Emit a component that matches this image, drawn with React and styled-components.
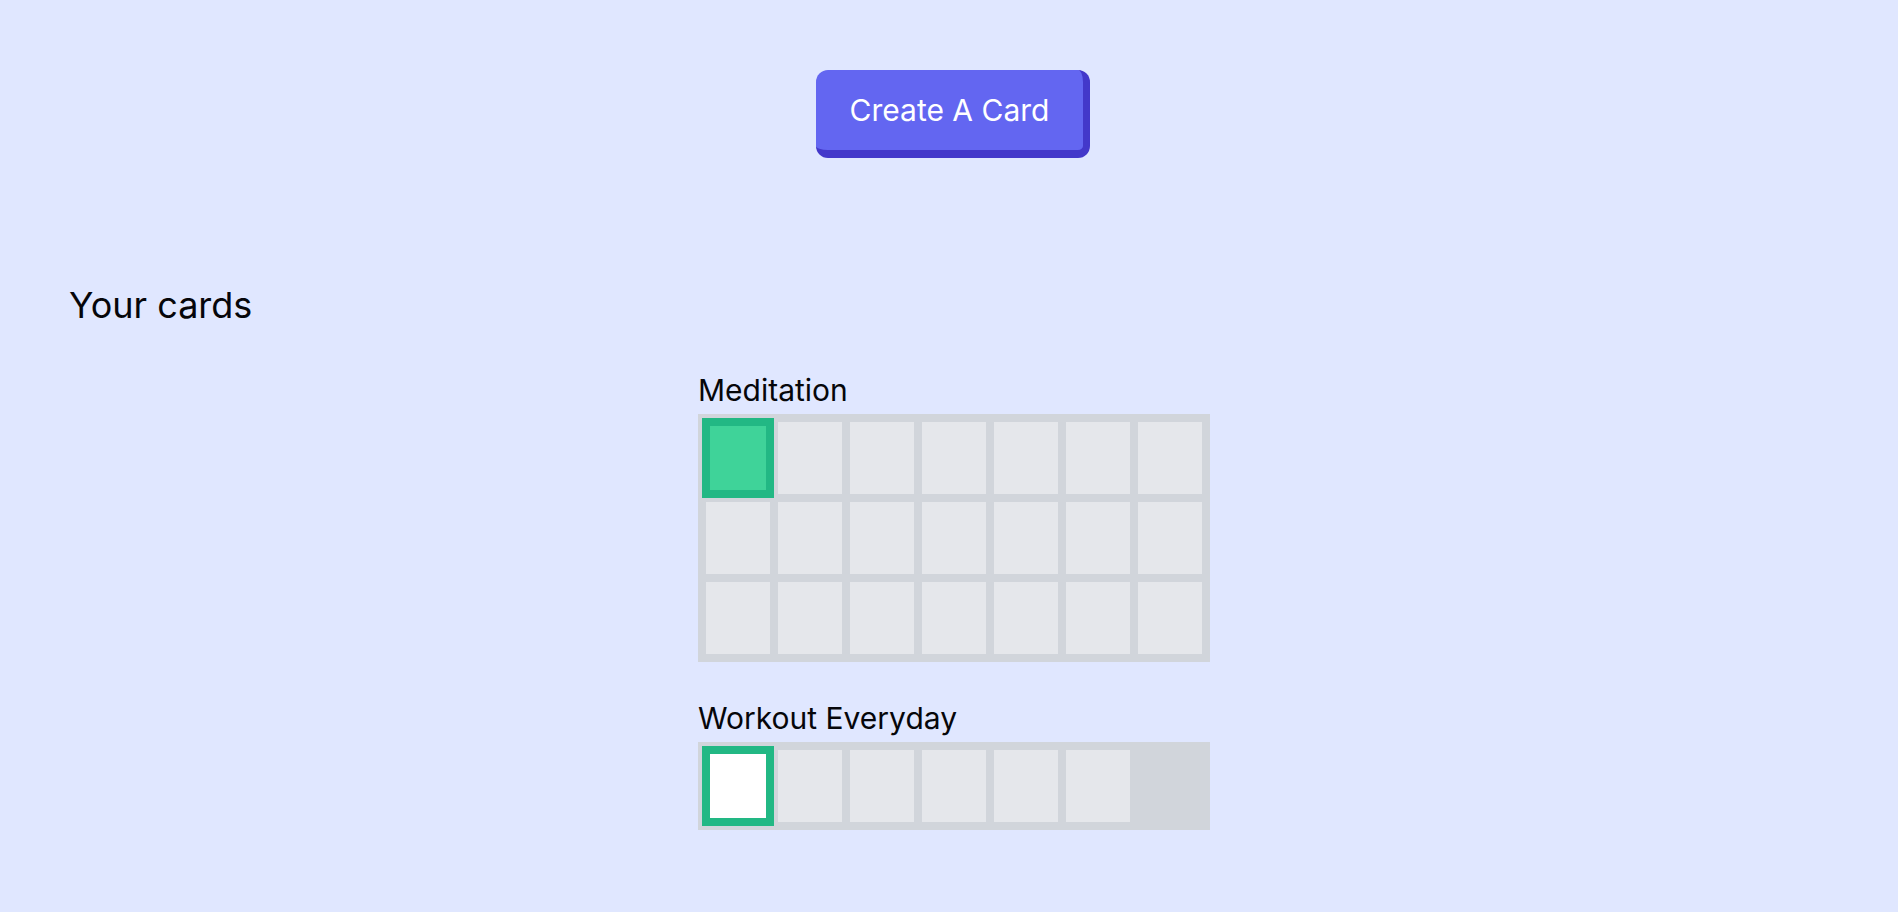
import React from "react";
import styled, { createGlobalStyle } from "styled-components";

const GlobalStyle = createGlobalStyle`
  html, body {
    margin: 0;
    padding: 0;
    background: #e0e7ff;
    font-family: Inter, "Noto Sans", "Liberation Sans", sans-serif;
    color: #06060a;
  }
`;

const Page = styled.main`
  min-height: 912px;
  box-sizing: border-box;
  padding-top: 70px;
  display: flex;
  flex-direction: column;
`;

const ButtonRow = styled.div`
  display: flex;
  justify-content: center;
  padding-left: 8px;
`;

const CreateButton = styled.button`
  font-family: inherit;
  font-size: 30px;
  line-height: 36px;
  color: #ffffff;
  background: #6366f1;
  border: none;
  border-right: 7px solid #4338ca;
  border-bottom: 8px solid #4338ca;
  border-radius: 12px;
  height: 88px;
  width: 274px;
  padding: 0;
  cursor: pointer;
`;

const SectionTitle = styled.h2`
  margin: 127px 0 0 69px;
  font-size: 36px;
  line-height: 40px;
  font-weight: 400;
`;

const CardList = styled.section`
  display: flex;
  flex-direction: column;
  align-items: center;
  gap: 40px;
  margin-top: 49px;
  padding-left: 10px;
`;

const Card = styled.div`
  display: flex;
  flex-direction: column;
  gap: 8px;
  width: 512px;
`;

const CardTitle = styled.h3`
  margin: 0;
  font-size: 30px;
  line-height: 32px;
  font-weight: 400;
`;

const DayGrid = styled.div`
  display: grid;
  grid-template-columns: repeat(7, 64px);
  grid-auto-rows: 72px;
  gap: 8px;
  padding: 8px;
  background: #d1d5db;
`;

const Day = styled.div`
  background: ${(p) => (p.$done ? "#3fd399" : p.$today ? "#ffffff" : "#e5e7eb")};
  box-shadow: ${(p) =>
    p.$today ? "0 0 0 4px #22b884, inset 0 0 0 4px #22b884" : "none"};
`;

const cards = [
  { name: "Meditation", days: 21, today: 0, done: [0] },
  { name: "Workout Everyday", days: 6, today: 0, done: [] },
];

export default function App() {
  return (
    <>
      <GlobalStyle />
      <Page>
        <ButtonRow>
          <CreateButton>Create A Card</CreateButton>
        </ButtonRow>
        <SectionTitle>Your cards</SectionTitle>
        <CardList>
          {cards.map((c) => (
            <Card key={c.name}>
              <CardTitle>{c.name}</CardTitle>
              <DayGrid>
                {Array.from({ length: c.days }).map((_, i) => (
                  <Day key={i} $today={i === c.today} $done={c.done.includes(i)} />
                ))}
              </DayGrid>
            </Card>
          ))}
        </CardList>
      </Page>
    </>
  );
}
